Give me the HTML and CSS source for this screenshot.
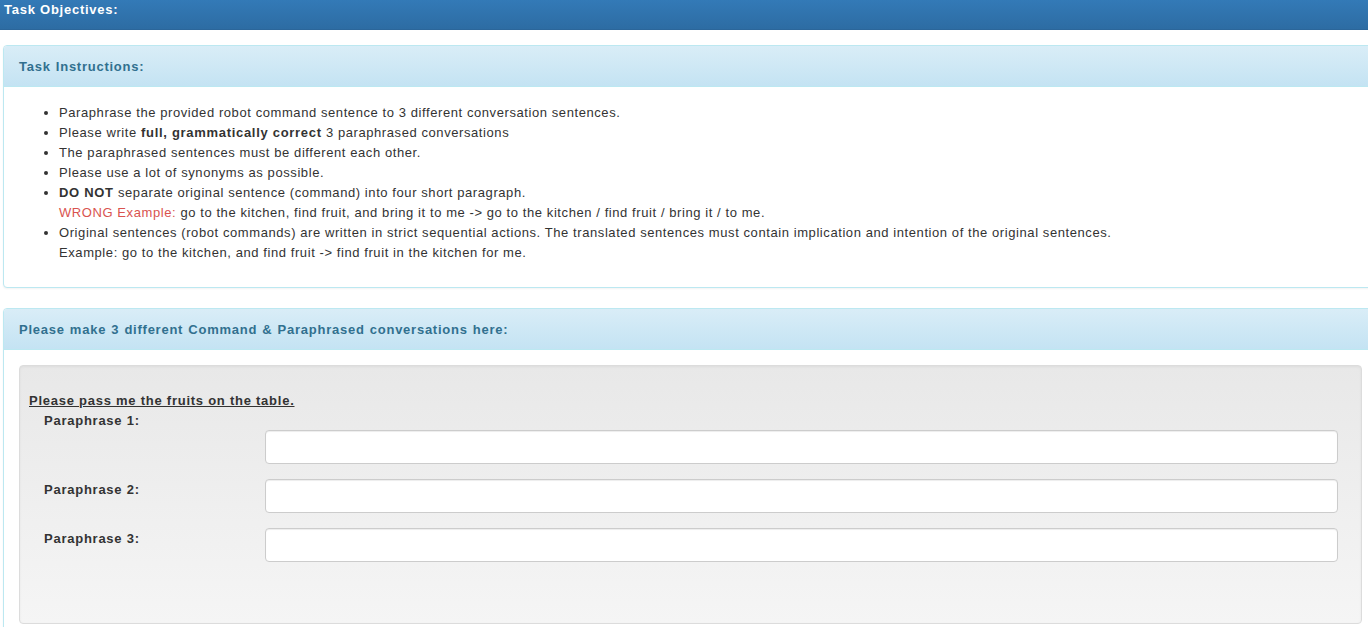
FILE: index.html
```html
<!DOCTYPE html>
<html>
<head>
<meta charset="utf-8">
<title>Task</title>
<link rel="stylesheet" href="styles.css">
</head>
<body>
<div class="topbar">Task Objectives:</div>
<div class="page">
  <div class="panel">
    <div class="panel-heading">Task Instructions:</div>
    <div class="panel-body">
      <ul class="rules">
        <li>Paraphrase the provided robot command sentence to 3 different conversation sentences.</li>
        <li>Please write <b>full, grammatically correct</b> 3 paraphrased conversations</li>
        <li>The paraphrased sentences must be different each other.</li>
        <li>Please use a lot of synonyms as possible.</li>
        <li><b>DO NOT</b> separate original sentence (command) into four short paragraph.<br><span class="wrong">WRONG Example:</span> go to the kitchen, find fruit, and bring it to me -&gt; go to the kitchen / find fruit / bring it / to me.</li>
        <li>Original sentences (robot commands) are written in strict sequential actions. The translated sentences must contain implication and intention of the original sentences.<br>Example: go to the kitchen, and find fruit -&gt; find fruit in the kitchen for me.</li>
      </ul>
    </div>
  </div>
  <div class="panel">
    <div class="panel-heading">Please make 3 different Command &amp; Paraphrased conversations here:</div>
    <div class="panel-body">
      <div class="well">
        <div class="command">Please pass me the fruits on the table.</div>
        <div class="label-line">Paraphrase 1:</div>
        <div class="form-row first-row">
          <div class="label"></div>
          <input class="field" type="text">
        </div>
        <div class="form-row">
          <div class="label">Paraphrase 2:</div>
          <input class="field" type="text">
        </div>
        <div class="form-row">
          <div class="label">Paraphrase 3:</div>
          <input class="field" type="text">
        </div>
      </div>
    </div>
  </div>
</div>
</body>
</html>
```
FILE: styles.css
```css
html, body {
  margin: 0;
  padding: 0;
  overflow: hidden;
}
body {
  font-family: "Liberation Sans", Arial, sans-serif;
  font-size: 13px;
  line-height: 20px;
  letter-spacing: 0.6px;
  color: #333;
  background: #fff;
  width: 1368px;
}
b, .topbar, .panel-heading, .command, .label, .label-line {
  letter-spacing: 0.75px;
}
.rules li {
  letter-spacing: 0.58px;
}
.rules li b {
  letter-spacing: 0.7px;
}
.panel-heading {
  word-spacing: 0.8px;
}
.topbar {
  height: 30px;
  box-sizing: border-box;
  padding: 0 4px;
  line-height: 19px;
  font-weight: bold;
  color: #fff;
  background: linear-gradient(to bottom, #337ab7 0%, #2d6ca3 100%);
  border-bottom: 1px solid #2b669a;
}
.page {
  padding: 15px 0 0 3px;
  width: 1375px;
}
.panel {
  border: 1px solid #bce8f1;
  border-radius: 4px;
  background: #fff;
  margin-bottom: 20px;
  box-shadow: 0 1px 2px rgba(0,0,0,.05);
}
.panel-heading {
  padding: 11px 15px 9px;
  font-weight: bold;
  color: #31708f;
  background: linear-gradient(to bottom, #d9edf7 0%, #c4e3f3 100%);
  border-bottom: 1px solid #bce8f1;
  border-radius: 3px 3px 0 0;
  line-height: 20px;
}
.panel-body {
  padding: 16px 15px 14px;
}
.rules {
  margin: 0 0 10px 0;
  padding-left: 40px;
}
.wrong {
  color: #d9534f;
}
.well {
  border: 1px solid #dcdcdc;
  border-radius: 4px;
  background: linear-gradient(to bottom, #e8e8e8 0%, #f5f5f5 100%);
  box-shadow: inset 0 1px 3px rgba(0,0,0,.05), 0 1px 0 rgba(255,255,255,.1);
  padding: 25px 23px 58px 9px;
  min-height: 174px;
  margin-top: -1px;
}
.command {
  font-weight: bold;
  text-decoration: underline;
}
.label-line {
  font-weight: bold;
  padding-left: 15px;
}
.form-row {
  display: flex;
  align-items: flex-start;
  margin-bottom: 15px;
}
.first-row {
  margin-top: -1px;
}
.form-row:last-child {
  margin-bottom: 0;
}
.label {
  width: 221px;
  flex: none;
  padding-left: 15px;
  padding-top: 1px;
  font-weight: bold;
}
.field {
  flex: 1;
  height: 34px;
  box-sizing: border-box;
  border: 1px solid #ccc;
  border-radius: 4px;
  background: #fff;
  box-shadow: inset 0 1px 1px rgba(0,0,0,.075);
  padding: 6px 12px;
  font: inherit;
  margin: 0;
}
```
